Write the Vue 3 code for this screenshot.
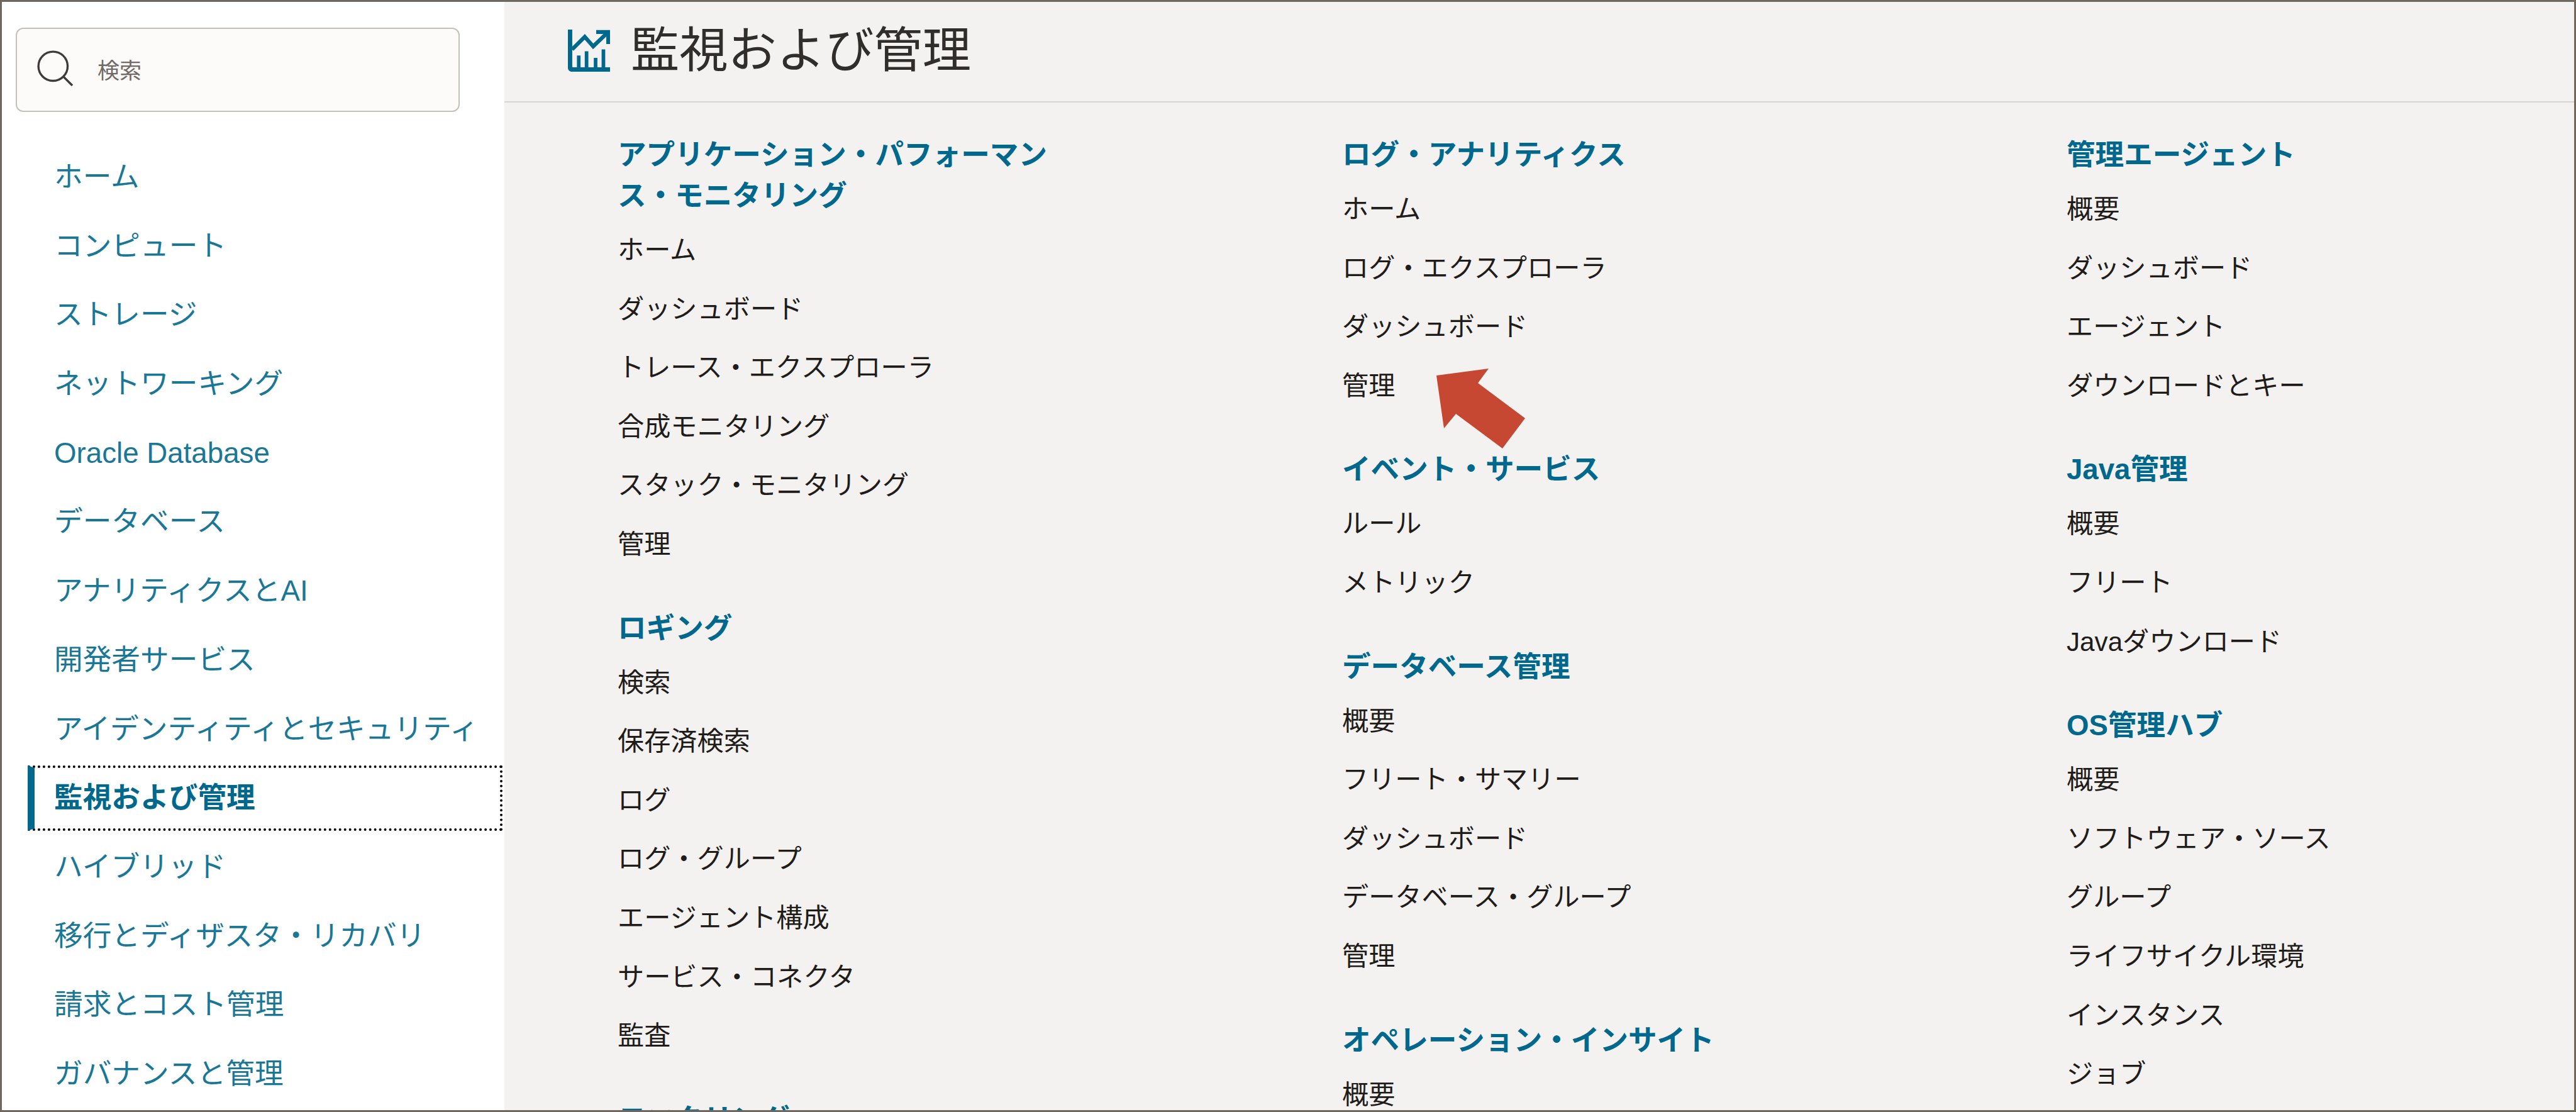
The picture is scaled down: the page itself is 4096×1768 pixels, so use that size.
<script setup>
const sideItems = ['ホーム','コンピュート','ストレージ','ネットワーキング','Oracle Database','データベース','アナリティクスとAI','開発者サービス','アイデンティティとセキュリティ','監視および管理','ハイブリッド','移行とディザスタ・リカバリ','請求とコスト管理','ガバナンスと管理']
const columns = [
  [
    { title: 'アプリケーション・パフォーマンス・モニタリング', items: ['ホーム','ダッシュボード','トレース・エクスプローラ','合成モニタリング','スタック・モニタリング','管理'] },
    { title: 'ロギング', items: ['検索','保存済検索','ログ','ログ・グループ','エージェント構成','サービス・コネクタ','監査'] },
    { title: 'モニタリング', items: [] }
  ],
  [
    { title: 'ログ・アナリティクス', items: ['ホーム','ログ・エクスプローラ','ダッシュボード','管理'] },
    { title: 'イベント・サービス', items: ['ルール','メトリック'] },
    { title: 'データベース管理', items: ['概要','フリート・サマリー','ダッシュボード','データベース・グループ','管理'] },
    { title: 'オペレーション・インサイト', items: ['概要'] }
  ],
  [
    { title: '管理エージェント', items: ['概要','ダッシュボード','エージェント','ダウンロードとキー'] },
    { title: 'Java管理', items: ['概要','フリート','Javaダウンロード'] },
    { title: 'OS管理ハブ', items: ['概要','ソフトウェア・ソース','グループ','ライフサイクル環境','インスタンス','ジョブ'] }
  ]
]
</script>

<template>
  <div class="frame">
    <aside class="side">
      <div class="search">
        <svg class="search-icon" viewBox="0 0 54 54" fill="none" stroke="#3f3b38" stroke-width="3.2">
          <circle cx="24" cy="24" r="22"/>
          <path d="M40 40 L53 53"/>
        </svg>
        <span class="search-text">検索</span>
      </div>
      <nav class="side-nav">
        <a v-for="s in sideItems" :key="s" class="side-item" :class="{ active: s === '監視および管理' }">{{ s }}</a>
      </nav>
    </aside>
    <main class="main">
      <header class="head">
        <svg class="head-icon" viewBox="0 0 70 70" fill="none" stroke="#00688c" stroke-width="7.5">
          <path d="M3.5 0 V62 Q3.5 66.5 8 66.5 H70"/>
          <path d="M7 33 L28 12 L42 28 L66 5" stroke-width="6.5"/>
          <path d="M47 4 H67 V24" stroke-width="6.5"/>
          <path d="M18 64 V43 M31 64 V36 M46 64 V47 M59 64 V33" stroke-width="6"/>
        </svg>
        <h1>監視および管理</h1>
      </header>
      <div class="cols">
        <div v-for="(col, i) in columns" :key="i" class="col">
          <section v-for="sec in col" :key="sec.title" class="sec">
            <h2>{{ sec.title }}</h2>
            <div v-for="(it, j) in sec.items" :key="j" class="item">{{ it }}</div>
          </section>
        </div>
      </div>
      <svg class="arrow" viewBox="0 0 141 127">
        <path fill="#c64832" d="M0 11 L83 0 L66 23 L141 79 L105 127 L31 72 L12 95 Z"/>
      </svg>
    </main>
  </div>
</template>

<style>
html, body { margin: 0; padding: 0; }
</style>

<style scoped>
.frame {
  width: 4096px;
  height: 1768px;
  box-sizing: border-box;
  border: 3px solid #6f685f;
  display: flex;
  overflow: hidden;
  background: #fff;
  font-family: "Liberation Sans", "Noto Sans CJK JP", sans-serif;
}
.side {
  width: 799px;
  flex: none;
  background: #fff;
  padding: 41px 0 0 22px;
  box-sizing: border-box;
}
.search {
  width: 706px;
  height: 134px;
  box-sizing: border-box;
  background: #fcfbfa;
  border: 2px solid #c4c1ba;
  border-radius: 12px;
  display: flex;
  align-items: center;
  padding-left: 32px;
}
.search-icon { width: 57px; height: 57px; flex: none; margin-bottom: 6px; }
.search-text { margin-left: 39px; font-size: 35px; color: #6f6a65; margin-bottom: 4px; }
.side-nav { margin-top: 49px; display: flex; flex-direction: column; }
.side-item {
  height: 109.7px;
  line-height: 109.7px;
  padding-left: 61px;
  font-size: 45.7px;
  color: #1a7796;
  white-space: nowrap;
}
.side-item.active {
  position: relative;
  font-weight: 700;
  color: #00688c;
}
.side-item.active::before {
  content: "";
  position: absolute;
  left: 19px;
  right: 3px;
  top: 3px;
  bottom: 3px;
  border: 4px dotted #000;
  border-left: 11px solid #00688c;
}
.main {
  flex: 1;
  min-width: 0;
  background: #f3f2f0;
  position: relative;
}
.head {
  height: 160px;
  box-sizing: border-box;
  border-bottom: 2px solid #d8d5d0;
  display: flex;
  align-items: center;
  padding-left: 101px;
  padding-bottom: 3px;
}
.head-icon { width: 67px; height: 67px; flex: none; }
.head h1 {
  margin: 0 0 0 33px;
  font-size: 77.3px;
  font-weight: 400;
  color: #312d2a;
  line-height: 1;
}
.cols {
  display: grid;
  grid-template-columns: repeat(3, 1152px);
  padding: 51px 0 0 180px;
}
.sec + .sec { margin-top: 54px; }
.sec h2 {
  margin: 0 0 7px;
  width: 700px;
  font-size: 45.6px;
  line-height: 65px;
  font-weight: 700;
  color: #00688c;
}
.item {
  height: 93.6px;
  line-height: 93.6px;
  font-size: 42.2px;
  color: #1f1c1a;
  white-space: nowrap;
}
.arrow {
  position: absolute;
  left: 1482px;
  top: 583px;
  width: 141px;
  height: 127px;
}
</style>
